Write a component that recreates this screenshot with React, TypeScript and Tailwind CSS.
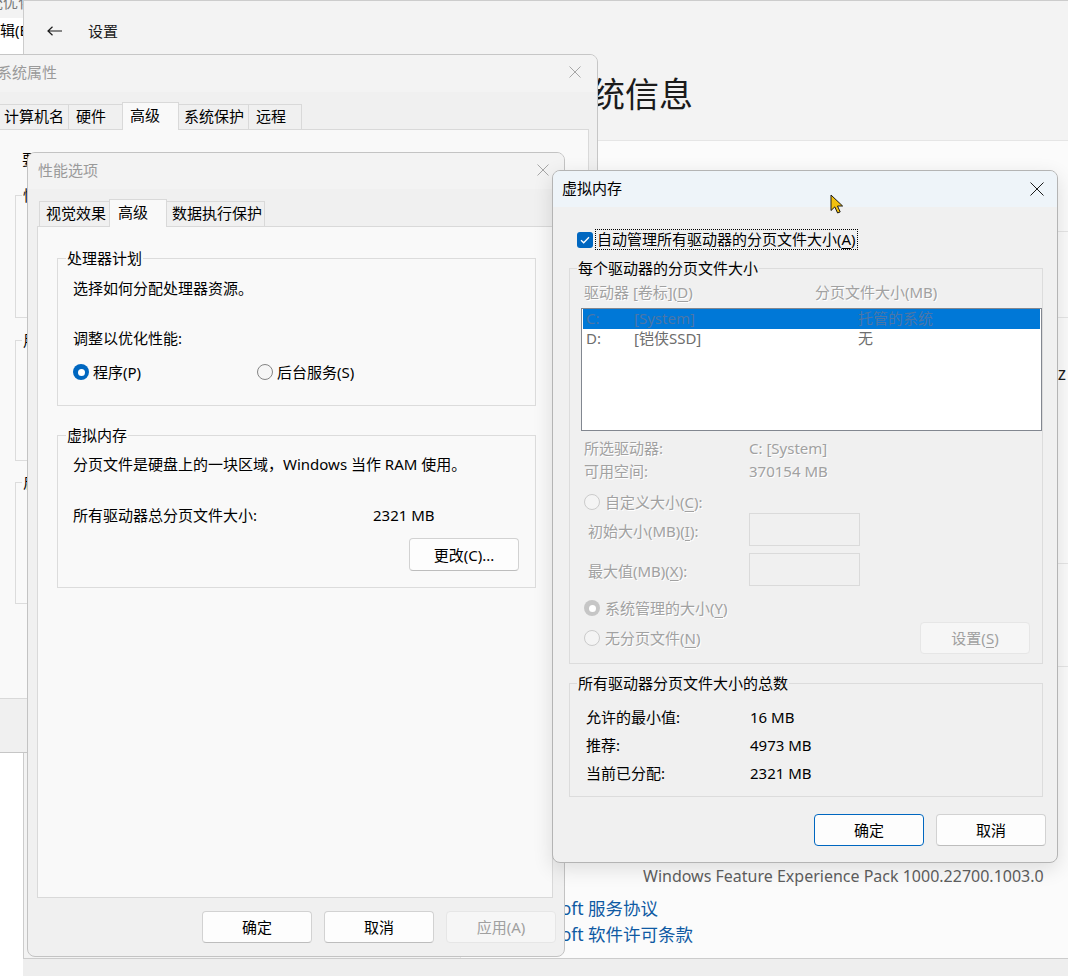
import React from "react";

const font = "font-['Noto_Sans','Noto_Sans_CJK_SC',sans-serif]";
const dis = "text-[#a1a1a1] [text-shadow:1px_1px_0_#ffffff]";

const CloseX = ({ size, color, stroke = 1 }: { size: number; color: string; stroke?: number }) => (
    <svg width={size} height={size} viewBox={`0 0 ${size} ${size}`} className="shrink-0">
        <path
            d={`M0.5 0.5 L${size - 0.5} ${size - 0.5} M${size - 0.5} 0.5 L0.5 ${size - 0.5}`}
            stroke={color}
            strokeWidth={stroke}
            fill="none"
        />
    </svg>
);

const Key = ({ k }: { k: string }) => (
    <span className="underline underline-offset-[3px] decoration-1">{k}</span>
);

type BtnProps = { children: React.ReactNode; kind?: "normal" | "default" | "disabled"; className?: string };

const WinButton = ({ children, kind = "normal", className = "" }: BtnProps) => {
    const look =
        kind === "default"
            ? "border-[#0067c0] bg-[#fdfdfd] text-black"
            : kind === "disabled"
              ? "border-[#e6e6e6] bg-[#f6f6f6] text-[#a0a0a0]"
              : "border-[#d2d2d2] border-b-[#bdbdbd] bg-[#fdfdfd] text-black";
    return (
        <div
            className={`flex items-center justify-center w-[110px] h-[32px] shrink-0 rounded-[4px] border text-[15px] leading-[20px] ${look} ${className}`}
        >
            {children}
        </div>
    );
};

const Radio = ({ checked, disabled }: { checked?: boolean; disabled?: boolean }) =>
    checked ? (
        <span
            className={`flex shrink-0 items-center justify-center w-[16px] h-[16px] rounded-full ${disabled ? "bg-[#c6c6c6]" : "bg-[#0067c0]"}`}
        >
            <span className="w-[7px] h-[7px] rounded-full bg-white" />
        </span>
    ) : (
        <span
            className={`shrink-0 w-[16px] h-[16px] rounded-full border ${disabled ? "border-[#cbcbcb] bg-[#f4f4f4]" : "border-[#858585] bg-[#f6f6f6]"}`}
        />
    );

const Tab = ({ label, active, className }: { label: string; active?: boolean; className: string }) => (
    <div
        className={`flex items-center border border-b-0 border-[#d9d9d9] text-[15px] leading-[20px] text-black whitespace-nowrap ${active ? "relative z-10 h-[28px] bg-[#f9f9f9] pb-[3px]" : "h-[26px] bg-[#f0f0f0] pb-[3px]"} ${className}`}
    >
        {label}
    </div>
);

const SettingsWindow = () => (
    <div className="absolute left-[23px] top-0 w-[1045px] h-[959px] flex flex-col border-l border-t border-b border-[#cccccc] bg-[#f3f3f3]">
        <div className="h-[61px] shrink-0 flex items-center gap-[25px] pl-[23px]">
            <svg width="16" height="10" viewBox="0 0 16 10" className="mt-[-1px]">
                <path d="M1 5 H15 M5.5 0.8 L1 5 L5.5 9.2" stroke="#1b1b1b" strokeWidth="1.2" fill="none" />
            </svg>
            <span className="text-[15px] leading-[20px] text-[#1b1b1b] pb-[2px]">设置</span>
        </div>
        <div className="pl-[533px] mt-[11px] text-[34px] leading-[42px] text-[#1b1b1b] whitespace-nowrap">
            系统信息
        </div>
        <div className="ml-[436px] mt-[25px] flex-1 flex flex-col bg-[#fbfbfb] border-t border-l border-[#e5e5e5]">
            <div className="h-[91px] shrink-0 border-b border-[#e5e5e5]" />
            <div className="h-[86px] shrink-0 border-b border-[#e5e5e5]" />
            <div className="h-[246px] shrink-0 border-b border-[#e5e5e5] flex justify-end pr-[2px] pt-[43px]">
                <span className="text-[17.5px] leading-[24px] text-[#1b1b1b] whitespace-nowrap h-[24px]">2.50 GHz</span>
            </div>
            <div className="h-[103px] shrink-0 border-b border-[#e5e5e5]" />
            <div className="flex-1 flex flex-col justify-end pb-[11px]">
                <div className="pl-[182px] text-[16px] leading-[26px] text-[#5f5f5f] whitespace-nowrap">
                    Windows Feature Experience Pack 1000.22700.1003.0
                </div>
                <div className="pl-[45px] mt-[6px] text-[17.5px] leading-[26px] text-[#0f5aa3] whitespace-nowrap">
                    Microsoft 服务协议
                </div>
                <div className="pl-[45px] text-[17.5px] leading-[26px] text-[#0f5aa3] whitespace-nowrap">
                    Microsoft 软件许可条款
                </div>
            </div>
        </div>
    </div>
);

const SystemProperties = () => (
    <div className="absolute left-[-16px] top-[54px] w-[614px] h-[699px] flex flex-col rounded-[8px] border border-[#c6c6c6] bg-[#f0f0f0] overflow-hidden">
        <div className="h-[37px] shrink-0 flex items-center justify-between pl-[12px] pr-[16px] pb-[3px] bg-[#f3f3f3]">
            <span className="text-[15px] leading-[20px] text-[#9a9a9a]">系统属性</span>
            <CloseX size={12} color="#a6a6a6" />
        </div>
        <div className="flex items-end pl-[11px] pt-[10px] [&>*+*]:-ml-px">
            <Tab label="计算机名" className="w-[73px] pl-[7px]" />
            <Tab label="硬件" className="w-[55px] pl-[7px]" />
            <Tab label="高级" active className="w-[57px] pl-[7px]" />
            <Tab label="系统保护" className="w-[71px] pl-[5px]" />
            <Tab label="远程" className="w-[54px] pl-[7px]" />
        </div>
        {/* most of this panel sits under 性能选项; only the left strip shows */}
        <div className="-mt-px mx-[8px] h-[570px] shrink-0 border border-[#d9d9d9] bg-[#f9f9f9] flex flex-col px-[21px] pt-[19px] text-[15px] leading-[20px] text-black">
            <p className="pl-[7px] whitespace-nowrap">要进行</p>
            <fieldset className="mt-[16px] h-[133px] border border-[#dcdcdc]">
                <legend className="ml-[6px] px-px">性能</legend>
            </fieldset>
            <fieldset className="mt-[12px] h-[131px] border border-[#dcdcdc]">
                <legend className="ml-[6px] px-px">用户</legend>
            </fieldset>
            <fieldset className="mt-[11px] h-[132px] border border-[#dcdcdc]">
                <legend className="ml-[6px] px-px">启动</legend>
            </fieldset>
        </div>
    </div>
);

const PerformanceOptions = () => (
    <div className="absolute left-[27px] top-[152px] w-[538px] h-[805px] flex flex-col rounded-[8px] border border-[#c3c3c3] bg-[#f0f0f0] overflow-hidden">
        <div className="h-[36px] shrink-0 flex items-center justify-between pl-[10px] pr-[15px] pb-[3px] bg-[#f3f3f3]">
            <span className="text-[15px] leading-[20px] text-[#9a9a9a]">性能选项</span>
            <CloseX size={12} color="#a6a6a6" />
        </div>
        <div className="flex items-end pl-[11px] pt-[10px] [&>*+*]:-ml-px">
            <Tab label="视觉效果" className="w-[71px] pl-[6px]" />
            <Tab label="高级" active className="w-[58px] pl-[8px]" />
            <Tab label="数据执行保护" className="w-[99px] pl-[5px]" />
        </div>
        <div className="-mt-px ml-[9px] w-[516px] h-[672px] shrink-0 border border-[#d9d9d9] bg-[#f9f9f9] pl-[19px] pt-[21px] text-[15px] leading-[20px] text-black">
            <fieldset className="w-[479px] border border-[#dcdcdc] pb-[23px]">
                <legend className="ml-[8px] px-px">处理器计划</legend>
                <div className="pl-[15px] flex flex-col">
                    <p className="mt-[10px]">选择如何分配处理器资源。</p>
                    <p className="mt-[30px]">调整以优化性能:</p>
                    <div className="mt-[14px] flex items-center h-[20px]">
                        <div className="w-[184px] flex items-center gap-[4px]">
                            <Radio checked />
                            <span>程序(P)</span>
                        </div>
                        <div className="flex items-center gap-[4px]">
                            <Radio />
                            <span>后台服务(S)</span>
                        </div>
                    </div>
                </div>
            </fieldset>
            <fieldset className="mt-[19px] w-[479px] border border-[#dcdcdc] pb-[16px]">
                <legend className="ml-[8px] px-px">虚拟内存</legend>
                <div className="pl-[15px] pr-[16px] flex flex-col">
                    <p className="mt-[9px] whitespace-nowrap">分页文件是硬盘上的一块区域，Windows 当作 RAM 使用。</p>
                    <div className="mt-[31px] flex">
                        <span className="w-[300px]">所有驱动器总分页文件大小:</span>
                        <span>2321 MB</span>
                    </div>
                    <WinButton className="mt-[13px] self-end h-[33px]">更改(C)...</WinButton>
                </div>
            </fieldset>
        </div>
        <div className="flex justify-end gap-[12px] pr-[8px] mt-[13px]">
            <WinButton>确定</WinButton>
            <WinButton>取消</WinButton>
            <WinButton kind="disabled">应用(A)</WinButton>
        </div>
    </div>
);

const drives = [
    { letter: "C:", label: "[System]", size: "托管的系统", selected: true },
    { letter: "D:", label: "[铠侠SSD]", size: "无", selected: false },
];

const VirtualMemory = () => (
    <div className="absolute left-[552px] top-[170px] w-[506px] h-[693px] flex flex-col rounded-[8px] border border-[#b4b4b4] bg-[#f0f0f0] overflow-hidden shadow-[0_6px_20px_rgba(0,0,0,0.12)]">
        <div className="h-[36px] shrink-0 flex items-center justify-between pl-[9px] pr-[13px] bg-[#eef4f9]">
            <span className="text-[15px] leading-[20px] text-black pb-[2px]">虚拟内存</span>
            <CloseX size={14} color="#1b1b1b" />
        </div>
        <div className="flex flex-col pl-[16px] pr-[14px] pt-[22px] text-[15px] leading-[20px] text-black">
            <div className="ml-[8px] h-[21px] flex items-center gap-[2px]">
                <span className="flex items-center justify-center w-[16px] h-[16px] rounded-[3px] bg-[#0067c0]">
                    <svg width="10" height="8" viewBox="0 0 10 8">
                        <path d="M1 4.2 L3.7 6.8 L9 1.2" stroke="#ffffff" strokeWidth="1.3" fill="none" />
                    </svg>
                </span>
                <span className="h-[21px] px-px border border-dotted border-black leading-[18px] whitespace-nowrap">
                    自动管理所有驱动器的分页文件大小(<Key k="A" />)
                </span>
            </div>

            <fieldset className="mt-[8px] h-[406px] border border-[#dcdcdc]">
                <legend className="ml-[7px] px-px">每个驱动器的分页文件大小</legend>
                <div className="flex flex-col">
                    <div className={`mt-[4px] ml-[14px] flex ${dis}`}>
                        <span className="w-[231px]">
                            驱动器 [卷标](<Key k="D" />)
                        </span>
                        <span>分页文件大小(MB)</span>
                    </div>
                    <div className="mt-[6px] ml-[11px] w-[461px] h-[123px] border border-[#828790] bg-white px-px">
                        {drives.map((d) => (
                            <div
                                key={d.letter}
                                className={`h-[20px] flex pl-[3px] leading-[19px] ${d.selected ? "bg-[#0078d7] text-[#4b76a8]" : "text-[#6d6d6d]"}`}
                            >
                                <span className="w-[48px]">{d.letter}</span>
                                <span className="w-[224px]">{d.label}</span>
                                <span>{d.size}</span>
                            </div>
                        ))}
                    </div>
                    <div className={`mt-[7px] ml-[14px] flex ${dis}`}>
                        <span className="w-[165px]">所选驱动器:</span>
                        <span>C:  [System]</span>
                    </div>
                    <div className={`mt-[3px] ml-[14px] flex ${dis}`}>
                        <span className="w-[165px]">可用空间:</span>
                        <span>370154 MB</span>
                    </div>
                    <div className="mt-[11px] ml-[14px] h-[20px] flex items-center gap-[5px]">
                        <Radio disabled />
                        <span className={dis}>
                            自定义大小(<Key k="C" />):
                        </span>
                    </div>
                    <div className="mt-[1px] ml-[18px] h-[33px] flex items-center">
                        <span className={`w-[161px] pt-[2px] ${dis}`}>
                            初始大小(MB)(<Key k="I" />):
                        </span>
                        <span className="w-[111px] h-[33px] border border-[#dadada]" />
                    </div>
                    <div className="mt-[7px] ml-[18px] h-[33px] flex items-center">
                        <span className={`w-[161px] pt-[2px] ${dis}`}>
                            最大值(MB)(<Key k="X" />):
                        </span>
                        <span className="w-[111px] h-[33px] border border-[#dadada]" />
                    </div>
                    <div className="mt-[12px] ml-[14px] h-[20px] flex items-center gap-[5px]">
                        <Radio checked disabled />
                        <span className={dis}>
                            系统管理的大小(<Key k="Y" />)
                        </span>
                    </div>
                    <div className="mt-[4px] ml-[14px] mr-[12px] h-[31px] flex items-center justify-between">
                        <div className="flex items-center gap-[5px]">
                            <Radio disabled />
                            <span className={dis}>
                                无分页文件(<Key k="N" />)
                            </span>
                        </div>
                        <WinButton kind="disabled" className="h-[31px]">
                            设置(<Key k="S" />)
                        </WinButton>
                    </div>
                </div>
            </fieldset>

            <fieldset className="mt-[9px] h-[124px] border border-[#dcdcdc]">
                <legend className="ml-[7px] px-px">所有驱动器分页文件大小的总数</legend>
                <div className="mt-[10px] ml-[16px] flex flex-col leading-[28px]">
                    <div className="flex">
                        <span className="w-[164px]">允许的最小值:</span>
                        <span>16 MB</span>
                    </div>
                    <div className="flex">
                        <span className="w-[164px]">推荐:</span>
                        <span>4973 MB</span>
                    </div>
                    <div className="flex">
                        <span className="w-[164px]">当前已分配:</span>
                        <span>2321 MB</span>
                    </div>
                </div>
            </fieldset>

            <div className="mt-[17px] mr-[-3px] flex justify-end gap-[12px]">
                <WinButton kind="default">确定</WinButton>
                <WinButton>取消</WinButton>
            </div>
        </div>
    </div>
);

const App = () => {
    return (
        <div className={`relative w-[1068px] h-[976px] overflow-hidden bg-[#eeeeee] ${font}`}>
            {/* app behind everything on the left */}
            <div className="absolute left-0 top-0 w-[23px] h-full flex flex-col bg-white overflow-hidden">
                <div className="h-[18px] shrink-0 bg-[#f3f3f3] overflow-hidden">
                    <div className="ml-[-27px] mt-[-8px] whitespace-nowrap text-[15px] leading-[20px] text-[#7a7a7a]">
                        系统优化
                    </div>
                </div>
                <div className="h-[36px] shrink-0 pt-[2px]">
                    <span className="block ml-[-15px] whitespace-nowrap text-[15px] leading-[20px] text-black">
                        编辑(E)
                    </span>
                </div>
            </div>

            <SettingsWindow />
            <SystemProperties />
            <PerformanceOptions />
            <VirtualMemory />

            {/* mouse pointer */}
            <svg className="absolute left-[830px] top-[194px]" width="17" height="22" viewBox="0 0 17 22">
                <path
                    d="M1 1 L1 16.5 L4.8 12.9 L7.6 19 L10.2 17.9 L7.5 12 L12.6 12 Z"
                    fill="#f2c00f"
                    stroke="#1a1a1a"
                    strokeWidth="1"
                    strokeLinejoin="round"
                />
            </svg>
        </div>
    );
};

export default App;
